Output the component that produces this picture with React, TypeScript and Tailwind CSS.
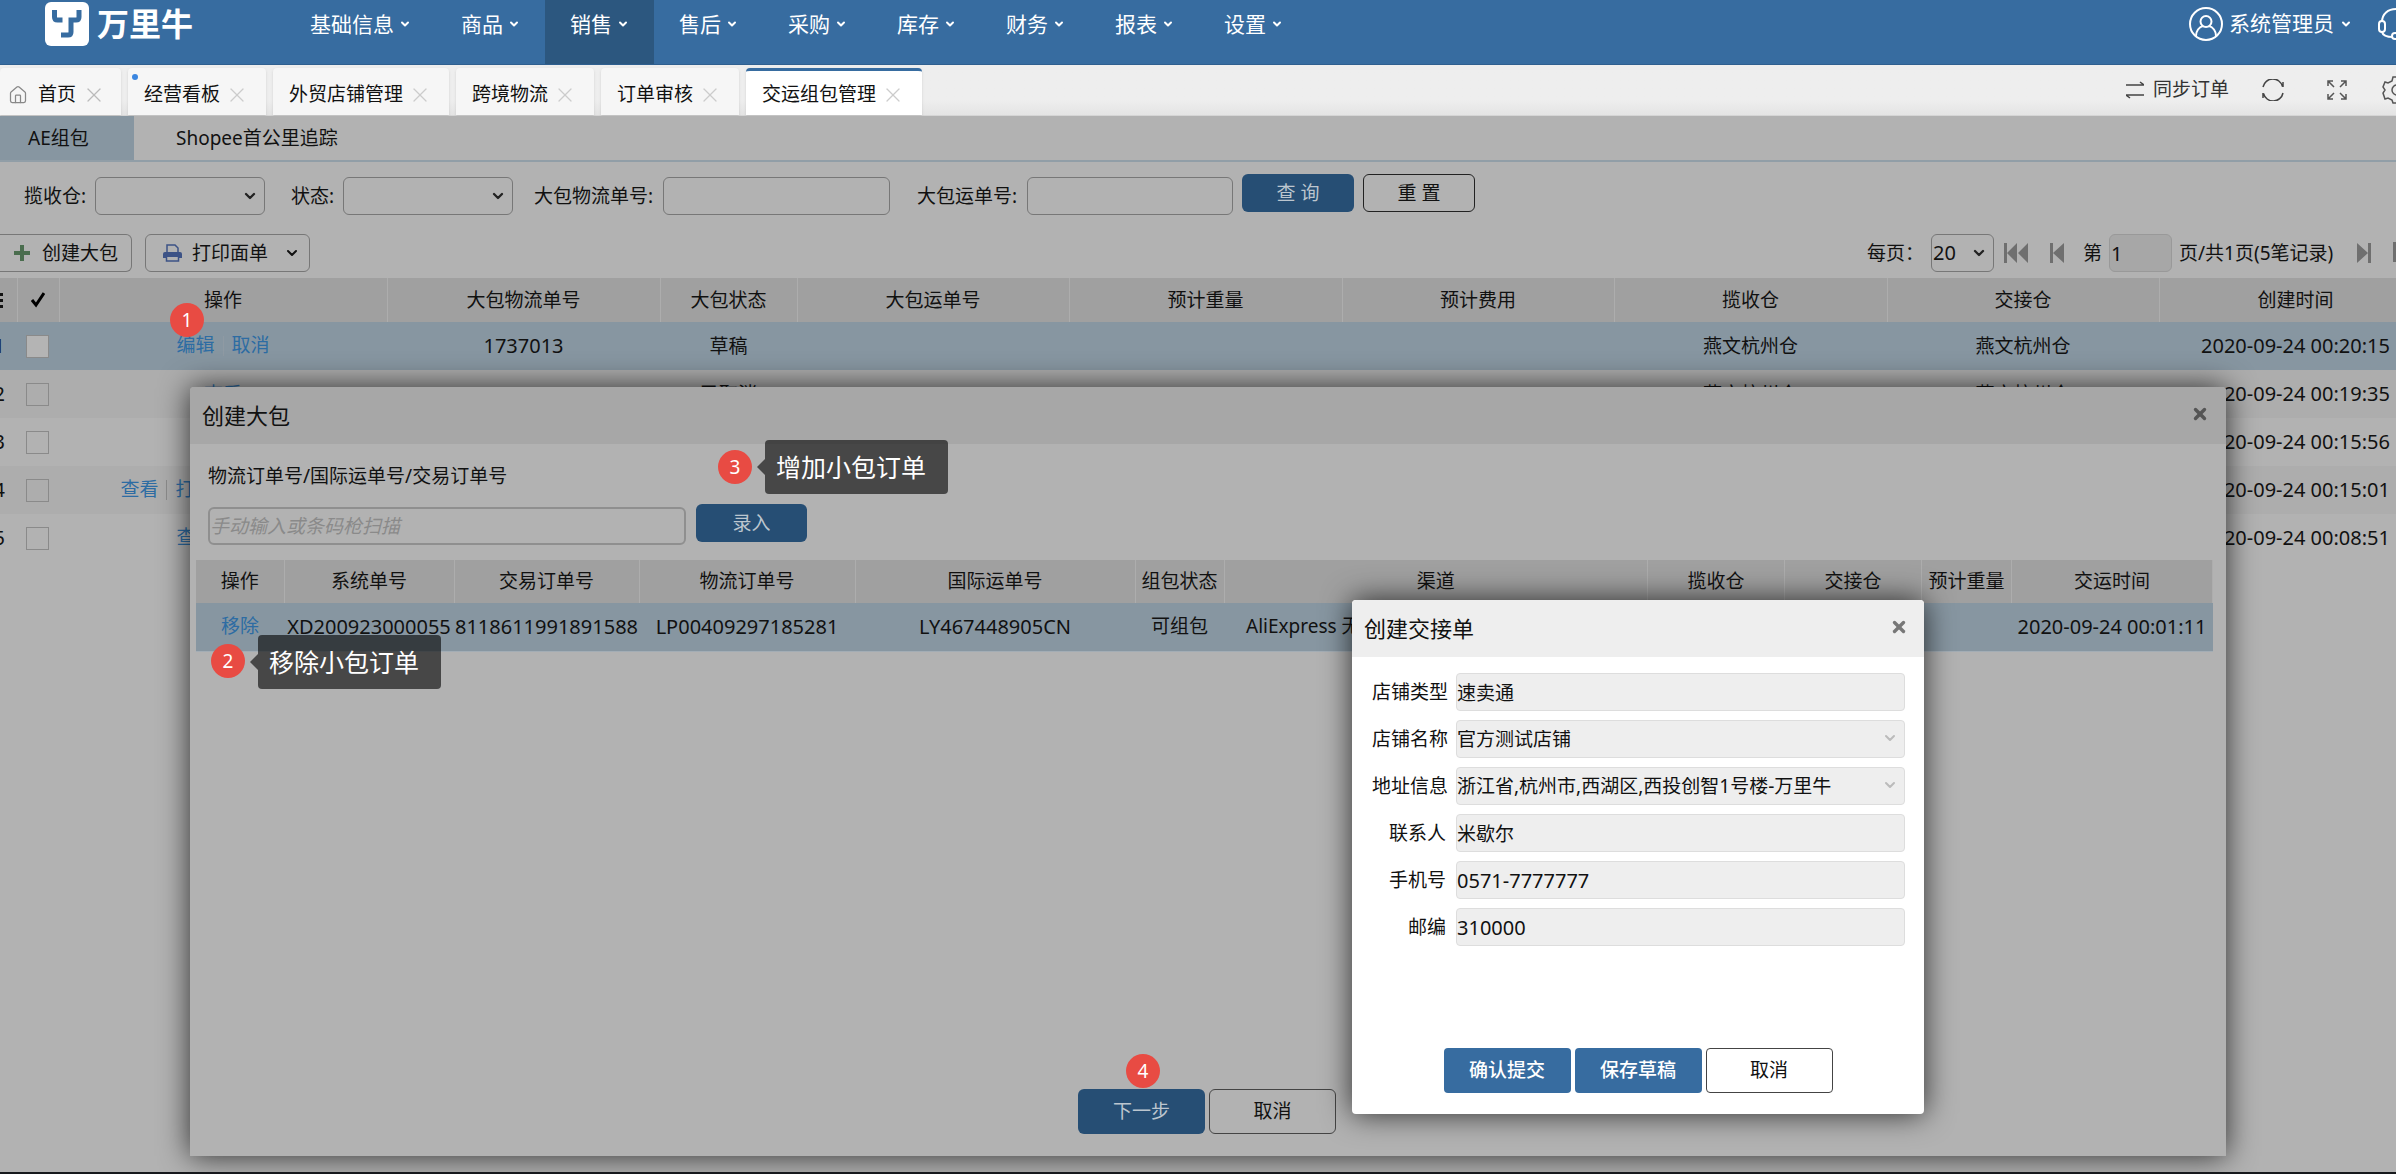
import React from 'react';
import { ChevronDown, House, X } from 'lucide-react';

const menus = ['基础信息', '商品', '销售', '售后', '采购', '库存', '财务', '报表', '设置'];

const tabs = [
  { label: '经营看板', dot: true },
  { label: '外贸店铺管理' },
  { label: '跨境物流' },
  { label: '订单审核' },
  { label: '交运组包管理', active: true },
];

const packages = [
  { links: ['编辑', '取消'], no: '1737013', status: '草稿', time: '2020-09-24 00:20:15' },
  { links: ['查看'], no: '', status: '已取消', time: '2020-09-24 00:19:35' },
  { links: ['查看'], no: '', status: '已取消', time: '2020-09-24 00:15:56' },
  { links: ['查看', '打印面单', '交接单'], no: '', status: '已交运', time: '2020-09-24 00:15:01' },
  { links: ['查看', '打印'], no: '', status: '已交运', time: '2020-09-24 00:08:51' },
];

const orderHeads = [
  '操作', '系统单号', '交易订单号', '物流订单号', '国际运单号', '组包状态',
  '渠道', '揽收仓', '交接仓', '预计重量', '交运时间',
];

const handoverFields = [
  { id: 'shopType', label: '店铺类型', value: '速卖通' },
  { id: 'shopName', label: '店铺名称', value: '官方测试店铺', select: true },
  { id: 'address', label: '地址信息', value: '浙江省,杭州市,西湖区,西投创智1号楼-万里牛', select: true },
  { id: 'contact', label: '联系人', value: '米歇尔', short: true },
  { id: 'mobile', label: '手机号', value: '0571-7777777', short: true, digits: true },
  { id: 'zip', label: '邮编', value: '310000', short: true, digits: true },
];

const Badge = ({ n, className }: { n: number; className: string }) => (
  <span
    className={`absolute z-20 flex h-[34px] w-[34px] items-center justify-center rounded-full bg-[#e84b43] text-[19px] leading-none text-white ${className}`}
  >
    {n}
  </span>
);

const Tip = ({ text, className }: { text: string; className: string }) => (
  <div className={`absolute z-20 flex h-[54px] w-[183px] items-center rounded bg-black/60 pl-[11px] text-[25px] text-white ${className}`}>
    <span className="absolute right-full top-1/2 -mt-2 h-4 w-2 bg-black/60 [clip-path:polygon(100%_0,100%_100%,0_50%)]" />
    {text}
  </div>
);

const SelectBox = ({ id, className, value }: { id: string; className: string; value?: string }) => (
  <div className={`relative ${className}`}>
    <select id={id} className="h-[38px] w-full appearance-none rounded-md border border-[#777] bg-transparent pl-px text-[20px] outline-none">
      <option>{value}</option>
    </select>
    <ChevronDown className="pointer-events-none absolute right-[7px] top-[11px] h-4 w-4 text-[#222]" strokeWidth={3.5} />
  </div>
);

const Logo = () => (
  <div className="flex w-[285px] shrink-0 items-center gap-2 pl-[45px]">
    <svg width="44" height="44" viewBox="0 0 44 44">
      <rect width="44" height="44" rx="6" fill="#fff" />
      <path d="M9.500 8v7q0 3 3 3h5M34 8v7q0 3-3 3h-5v12q0 3-3 3h-7" fill="none" stroke="#376ca0" strokeWidth="5" />
    </svg>
    <span className="text-[32px] font-bold leading-none text-white">万里牛</span>
  </div>
);

const Header = () => (
  <header className="flex h-[65px] border-b border-[#2f5f8f] bg-[#376ca0] text-[21px] text-white">
    <div className="flex pb-4">
      <Logo />
    </div>
    <nav className="flex">
      {menus.map((m) => (
        <a
          key={m}
          href="#"
          className={`flex shrink-0 items-center gap-[5px] px-[25px] pb-4 ${m === '销售' ? 'bg-[#2c577f]' : ''}`}
        >
          {m}
          <ChevronDown className="h-3 w-3" strokeWidth={4} />
        </a>
      ))}
    </nav>
    <div className="ml-auto flex items-center pb-[17px]">
      <button className="flex items-center gap-[6px]">
        <svg width="34" height="34" viewBox="0 0 34 34" fill="none" stroke="#fff" strokeWidth="2">
          <circle cx="17" cy="17" r="16" />
          <circle cx="17" cy="14.500" r="5.500" />
          <path d="M7 29c0-5 3-9 7-10M27 29c0-5-3-9-7-10" />
        </svg>
        系统管理员
        <ChevronDown className="h-3 w-3" strokeWidth={4} />
      </button>
      <button className="ml-[26px] w-[18px] overflow-hidden" aria-label="客服">
        <svg width="36" height="34" viewBox="0 0 36 34" fill="none" stroke="#fff" strokeWidth="2">
          <path d="M4 15C4 7 10 2 18 2s14 5 14 13" />
          <rect x="1" y="14" width="6" height="11" rx="3" />
          <rect x="29" y="14" width="6" height="11" rx="3" />
          <path d="M4 25c1 4 5 5 11 5" />
          <circle cx="17" cy="29" r="3" />
        </svg>
      </button>
    </div>
  </header>
);

const TabBar = () => (
  <div className="flex h-[51px] items-end border-b border-[#d5d5d5] bg-gradient-to-b from-[#eee] from-70% to-[#e4e4e4]">
    <div className="flex h-[47px] gap-[7px]">
      <div className="flex items-center rounded-t bg-[#f6f6f6] pl-2 pr-[15px] pt-1.5 shadow-sm">
        <House className="h-5 w-5 text-[#888]" strokeWidth={1.5} />
        <a href="#" className="ml-2.5">首页</a>
        <X className="ml-1.5 h-6 w-6 text-[#bbb]" strokeWidth={1.25} />
      </div>
      {tabs.map((t) => (
        <div
          key={t.label}
          className={`relative flex items-center gap-[5px] rounded-t pl-4 pr-[17px] shadow-sm ${
            t.active ? 'border-t-[3px] border-[#376ca0] bg-white pt-[3px]' : 'bg-[#f6f6f6] pt-1.5'
          }`}
        >
          {t.dot && <span className="absolute left-1 top-1.5 h-1.5 w-1.5 rounded-full bg-[#3b86e0]" />}
          <a href="#">{t.label}</a>
          <X className="h-6 w-6 text-[#ccc]" strokeWidth={1.25} />
        </div>
      ))}
    </div>
    <div className="ml-auto flex h-[51px] items-center text-[#333]">
      <button className="flex items-center gap-[9px]">
        <svg width="18" height="18" viewBox="0 0 18 18" fill="none" stroke="#444" strokeWidth="1.500">
          <path d="M0 4h18l-4-3M18 14H0l4 3" />
        </svg>
        同步订单
      </button>
      <button className="ml-[33px]" aria-label="刷新">
        <svg width="22" height="22" viewBox="0 0 22 22" fill="none" stroke="#444" strokeWidth="1.500">
          <path d="M1 8A10 10 0 0 1 20.500 7.500M21 3v5M21 14A10 10 0 0 1 1.500 14.500M1 19v-5" />
        </svg>
      </button>
      <button className="ml-[43px]" aria-label="全屏">
        <svg width="20" height="20" viewBox="0 0 20 20" fill="none" stroke="#555" strokeWidth="1.500">
          <path d="M1 6V1h5M1 1l6 6M14 1h5v5M19 1l-6 6M1 14v5h5M1 19l6-6M14 19h5v-5M19 19l-6-6" />
        </svg>
      </button>
      <button className="ml-[35px] w-[14px] overflow-hidden" aria-label="设置">
        <svg width="28" height="28" viewBox="0 0 28 28" fill="none" stroke="#555" strokeWidth="1.500">
          <path d="M11 1h6l1 4 4 2 4-1 2 6-3 2 3 4-3 5-4-1-4 2-1 3h-5l-1-3-4-2-3 1-2-6 2-3-2-3 2-5 3 1 4-2z" />
          <circle cx="15" cy="14" r="5" />
        </svg>
      </button>
    </div>
  </div>
);

const FilterBar = () => (
  <div className="flex items-start pl-6 pt-[15px]">
    <label htmlFor="warehouse" className="w-[71px] leading-[38px]">揽收仓:</label>
    <SelectBox id="warehouse" className="w-[170px]" />
    <label htmlFor="state" className="ml-[26px] w-[52px] leading-[38px]">状态:</label>
    <SelectBox id="state" className="w-[170px]" />
    <label htmlFor="logisticsNo" className="ml-[21px] w-[129px] leading-[38px]">大包物流单号:</label>
    <input id="logisticsNo" className="h-[38px] w-[227px] rounded-md border border-[#777] bg-transparent px-2" />
    <label htmlFor="waybillNo" className="ml-[27px] w-[110px] leading-[38px]">大包运单号:</label>
    <input id="waybillNo" className="h-[38px] w-[206px] rounded-md border border-[#777] bg-transparent px-2" />
    <button className="-mt-[3px] ml-[9px] h-[38px] w-[112px] rounded-md bg-[#264e74] text-[#bcc6cf]">查 询</button>
    <button className="-mt-[3px] ml-[9px] h-[38px] w-[112px] rounded-md border border-[#222]">重 置</button>
  </div>
);

const PageArrow = ({ double, flip, label }: { double?: boolean; flip?: boolean; label: string }) => (
  <button aria-label={label} className={flip ? 'rotate-180' : ''}>
    <svg width={double ? 24 : 14} height="20" viewBox={double ? '0 0 24 20' : '0 0 14 20'} fill="#6f6f6f">
      <path d={double ? 'M0 0h3v20H0zM13 0v20L3 10zM24 0v20L14 10z' : 'M0 0h3v20H0zM14 0v20L3 10z'} />
    </svg>
  </button>
);

const Toolbar = () => (
  <div className="flex items-center pb-[6px] pt-[19px]">
    <button className="flex h-[38px] w-[132px] items-center gap-3 rounded-r-md border border-l-0 border-[#777] pl-[14px]">
      <svg width="16" height="16" viewBox="0 0 16 16" fill="#4a6d4e">
        <path d="M6 0h4v6h6v4h-6v6H6v-6H0V6h6z" />
      </svg>
      创建大包
    </button>
    <button className="ml-[13px] flex h-[38px] w-[165px] items-center rounded-md border border-[#777] pl-[17px]">
      <svg width="19" height="18" viewBox="0 0 19 18">
        <path d="M4 8V1h8l3 3v4" fill="none" stroke="#3d5386" strokeWidth="1.500" />
        <path d="M0 10q0-2 2-2h15q2 0 2 2v4h-3v-1H3v1H0z" fill="#3d5386" />
        <path d="M3.500 13v4h12v-4" fill="none" stroke="#3d5386" strokeWidth="1.500" />
      </svg>
      <span className="ml-[10px]">打印面单</span>
      <ChevronDown className="ml-4 h-4 w-4" strokeWidth={3} />
    </button>
    <div className="ml-auto flex items-center">
      <label htmlFor="pageSize" className="w-[64px]">每页：</label>
      <SelectBox id="pageSize" className="w-[63px]" value="20" />
      <div className="ml-[10px] flex gap-[22px]">
        <PageArrow double label="首页" />
        <PageArrow label="上一页" />
      </div>
      <label htmlFor="pageNo" className="ml-[19px]">第</label>
      <input id="pageNo" defaultValue="1" className="ml-[7px] h-[38px] w-[63px] rounded-md border border-[#999] bg-[#a7a7a7] pl-px text-[20px]" />
      <span className="ml-[7px] w-[178px] whitespace-nowrap">页/共1页(5笔记录)</span>
      <PageArrow flip label="下一页" />
      <div className="ml-[22px] w-[3px] overflow-hidden">
        <PageArrow double label="末页" />
      </div>
    </div>
  </div>
);

const th = 'border-r border-[#adadad] font-normal';

const PackageTable = () => (
  <div className="overflow-hidden">
    <table className="w-[2432px] table-fixed border-collapse text-center">
      <colgroup>
        <col className="w-[17px]" />
        <col className="w-[42px]" />
        <col className="w-[328px]" />
        <col className="w-[273px]" />
        <col className="w-[137px]" />
        <col className="w-[272px]" />
        <col className="w-[273px]" />
        <col className="w-[272px]" />
        <col className="w-[273px]" />
        <col className="w-[272px]" />
        <col className="w-[273px]" />
      </colgroup>
      <thead>
        <tr className="h-11 bg-[#a0a0a0]">
          <th className={th}>
            <svg width="3" height="16" viewBox="0 0 3 16" fill="#111">
              <path d="M0 1h3v3H0zM0 7h3v3H0zM0 13h3v3H0z" />
            </svg>
          </th>
          <th className={th}>
            <svg width="14" height="16" viewBox="0 0 14 16" className="mx-auto" fill="none" stroke="#000" strokeWidth="3">
              <path d="M1 8l4 5 8-12" />
            </svg>
          </th>
          <th className={th}>操作</th>
          <th className={th}>大包物流单号</th>
          <th className={th}>大包状态</th>
          <th className={th}>大包运单号</th>
          <th className={th}>预计重量</th>
          <th className={th}>预计费用</th>
          <th className={th}>揽收仓</th>
          <th className={th}>交接仓</th>
          <th className={th}>创建时间</th>
        </tr>
      </thead>
      <tbody>
        {packages.map((p, i) => (
          <tr key={i} className={`h-12 ${i === 0 ? 'bg-[#8796a1]' : i % 2 ? 'bg-[#adadad]' : 'bg-[#b2b2b2]'}`}>
            <td>
              <span className="flex w-[5px] justify-end overflow-hidden text-[20px]">{i + 1}</span>
            </td>
            <td>
              <input
                type="checkbox"
                aria-label={`选择第${i + 1}行`}
                className={`ml-[9px] block h-[23px] w-[23px] appearance-none border border-[#8a8a8a] ${i === 0 ? 'bg-[#b4b4b4]' : ''}`}
              />
            </td>
            <td className="whitespace-nowrap text-[#2d6ca3]">
              {p.links.map((l, j) => (
                <React.Fragment key={l}>
                  {j > 0 && (
                    <span className={`mx-2 inline-block h-5 w-px align-middle ${i === 0 ? 'bg-[#8f9aa3]' : 'bg-[#8c8c8c]'}`} />
                  )}
                  <a href="#">{l}</a>
                </React.Fragment>
              ))}
            </td>
            <td className="text-[20px]">{p.no}</td>
            <td>{p.status}</td>
            <td />
            <td />
            <td />
            <td>燕文杭州仓</td>
            <td>燕文杭州仓</td>
            <td className="text-[20px]">{p.time}</td>
          </tr>
        ))}
      </tbody>
    </table>
  </div>
);

const PackageDialog = () => (
  <section
    role="dialog"
    aria-label="创建大包"
    className="absolute bottom-4 left-[190px] right-[170px] top-[271px] flex flex-col rounded-t bg-[#b2b2b2] shadow-[0_0_30px_rgba(0,0,0,0.75)]"
  >
    <div className="flex h-[57px] items-center justify-between rounded-t bg-[#a7a7a7] pb-0.5 pl-3 pr-[17px] text-[22px]">
      <h2>创建大包</h2>
      <button aria-label="关闭" className="pb-0.5">
        <X className="h-[18px] w-[18px] text-[#555]" strokeWidth={4.5} />
      </button>
    </div>
    <div className="px-[18px] pt-[18px]">
      <label htmlFor="scan" className="block leading-7">物流订单号/国际运单号/交易订单号</label>
      <div className="flex gap-[10px] pt-[14px]">
        <input
          id="scan"
          placeholder="手动输入或条码枪扫描"
          className="mt-[3px] h-[38px] w-[478px] rounded-md border-2 border-[#8f8f8f] bg-transparent placeholder:italic placeholder:text-[#8a8a8a]"
        />
        <button className="h-[38px] w-[111px] rounded-md bg-[#264e74] text-[#bcc6cf]">录入</button>
      </div>
    </div>
    <div className="overflow-hidden pl-[6px] pr-[13px] pt-[15px]">
      <table className="w-full table-fixed border-collapse whitespace-nowrap text-center">
        <colgroup>
          <col className="w-[88px]" />
          <col className="w-[170px]" />
          <col className="w-[185px]" />
          <col className="w-[216px]" />
          <col className="w-[280px]" />
          <col className="w-[89px]" />
          <col />
          <col className="w-[137px]" />
          <col className="w-[137px]" />
          <col className="w-[90px]" />
          <col className="w-[201px]" />
        </colgroup>
        <thead>
          <tr className="h-[43px] bg-[#a0a0a0]">
            {orderHeads.map((h) => (
              <th key={h} className={th}>{h}</th>
            ))}
          </tr>
        </thead>
        <tbody>
          <tr className="h-12 border-b border-[#a3adb5] bg-[#8796a1]">
            <td><a href="#" className="text-[#2d6ca3]">移除</a></td>
            <td className="text-[20px]">XD200923000055</td>
            <td className="text-[20px]">8118611991891588</td>
            <td className="text-[20px]">LP00409297185281</td>
            <td className="text-[20px]">LY467448905CN</td>
            <td>可组包</td>
            <td className="overflow-hidden pl-[22px] text-left">AliExpress 无忧物流-标准</td>
            <td />
            <td />
            <td />
            <td className="text-[20px]">2020-09-24 00:01:11</td>
          </tr>
        </tbody>
      </table>
    </div>
    <div className="mt-auto flex justify-center gap-1 pb-[22px] pr-0.5">
      <button className="relative h-[45px] w-[127px] rounded-md bg-[#264e74] text-[#bcc6cf]">
        下一步
        <Badge n={4} className="-top-[35px] left-[48px]" />
      </button>
      <button className="h-[45px] w-[127px] rounded-md border border-[#444]">取消</button>
    </div>
    <Badge n={2} className="left-[21px] top-[257px]" />
    <Tip text="移除小包订单" className="left-[68px] top-[248px]" />
    <Badge n={3} className="left-[528px] top-[63px]" />
    <Tip text="增加小包订单" className="left-[575px] top-[53px]" />
  </section>
);

const HandoverDialog = () => (
  <section
    role="dialog"
    aria-label="创建交接单"
    className="absolute right-[472px] top-[484px] z-30 flex w-[572px] flex-col rounded bg-white shadow-[0_0_30px_rgba(0,0,0,0.75)]"
  >
    <div className="flex h-[57px] items-center justify-between rounded-t bg-[#eee] pb-0.5 pl-3 pr-4 text-[22px]">
      <h2>创建交接单</h2>
      <button aria-label="关闭" className="pb-0.5">
        <X className="h-[18px] w-[18px] text-[#777]" strokeWidth={4.5} />
      </button>
    </div>
    <form className="flex flex-col gap-[9px] pl-4 pr-[19px] pt-4">
      {handoverFields.map((f) => (
        <div key={f.id} className="flex items-center">
          <label htmlFor={f.id} className={`w-[88px] text-right ${f.short ? 'pr-2.5' : 'pr-2'}`}>{f.label}</label>
          <div className="relative flex-1">
            {f.select ? (
              <>
                <select id={f.id} disabled className="h-[38px] w-full appearance-none rounded border border-[#ddd] bg-[#eee] opacity-100">
                  <option>{f.value}</option>
                </select>
                <ChevronDown className="absolute right-[7px] top-2.5 h-4 w-4 text-[#bbb]" strokeWidth={3} />
              </>
            ) : (
              <input
                id={f.id}
                readOnly
                value={f.value}
                className={`h-[38px] w-full rounded border border-[#ddd] bg-[#eee] ${f.digits ? 'text-[20px]' : ''}`}
              />
            )}
          </div>
        </div>
      ))}
    </form>
    <div className="flex justify-center gap-1 pb-[21px] pt-[102px]">
      <button className="h-[45px] w-[127px] rounded bg-[#376ca0] font-medium text-white">确认提交</button>
      <button className="h-[45px] w-[127px] rounded bg-[#376ca0] font-medium text-white">保存草稿</button>
      <button className="h-[45px] w-[127px] rounded border border-[#444]">取消</button>
    </div>
  </section>
);

const App = () => (
  <div className="flex min-h-screen flex-col overflow-hidden border-b-2 border-[#16181c] font-['Noto_Sans','Noto_Sans_CJK_SC',sans-serif] text-[19px] leading-none text-[#111]">
    <Header />
    <TabBar />
    <main className="relative flex-1 bg-[#b2b2b2]">
      <div className="flex h-[46px] border-b-2 border-[#919ea7]">
        <a href="#" className="flex w-[134px] items-center bg-[#8796a1] pl-7">AE组包</a>
        <a href="#" className="flex items-center pl-[42px]">Shopee首公里追踪</a>
      </div>
      <FilterBar />
      <Toolbar />
      <PackageTable />
      <Badge n={1} className="left-[170px] top-[187px]" />
      <PackageDialog />
      <HandoverDialog />
    </main>
  </div>
);

export default App;
